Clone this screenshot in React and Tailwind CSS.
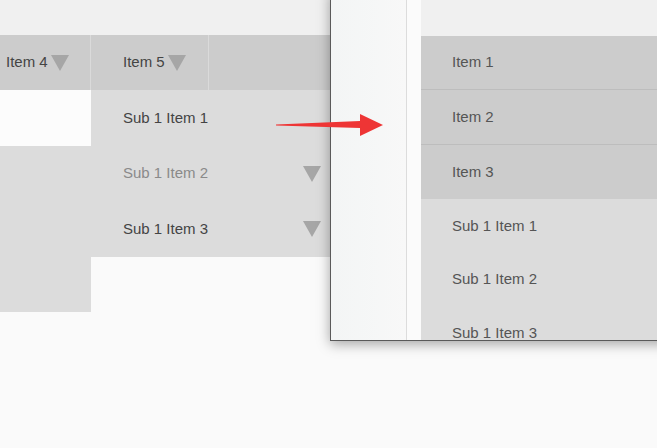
import React from "react";

const Caret = ({ className = "" }) => (
  <svg width="18" height="16" viewBox="0 0 18 16" className={className}>
    <polygon points="0,0 18,0 9,16" fill="#a6a6a6" />
  </svg>
);

const App = () => {
  return (
    <div className="relative w-[657px] h-[448px] overflow-hidden bg-[#fafafa] font-['Liberation_Sans',Arial,sans-serif] text-[15px]">
      {/* page behind */}
      <div className="h-[35px] bg-[#f0f0f0]"></div>
      <div className="flex h-[55px] bg-[#cccccc] text-[#444]">
        <div className="ml-[-26px] flex w-[117px] shrink-0 items-center gap-[3px] border-r border-[#dadada] pl-[32px]">
          <span>Item 4</span>
          <Caret className="mt-[1px]" />
        </div>
        <div className="flex w-[118px] shrink-0 items-center gap-[3px] border-r border-[#dadada] pl-[32px]">
          <span>Item 5</span>
          <Caret className="mt-[1px]" />
        </div>
      </div>
      <div className="flex items-start">
        <div className="ml-[-26px] w-[117px] shrink-0">
          <div className="h-[56px] bg-[#fcfcfc]"></div>
          <div className="h-[166px] bg-[#dcdcdc]"></div>
        </div>
        <div className="w-[250px] shrink-0 bg-[#dcdcdc] text-[#444]">
          <div className="flex h-[56px] items-center pl-[32px]">Sub 1 Item 1</div>
          <div className="flex h-[55px] items-center justify-between pl-[32px] pr-[20px] text-[#8a8a8a]">
            <span>Sub 1 Item 2</span>
            <Caret />
          </div>
          <div className="flex h-[56px] items-center justify-between pl-[32px] pr-[20px]">
            <span>Sub 1 Item 3</span>
            <Caret />
          </div>
        </div>
      </div>

      {/* mobile preview frame */}
      <div className="absolute left-[330px] top-[-10px] flex h-[351px] w-[340px] border border-[#5a5a5a] bg-[#fafafa] shadow-[0_3px_12px_rgba(0,0,0,0.35)]">
        <div className="w-[76px] shrink-0 bg-gradient-to-r from-[#f3f5f5] to-[#f8f8f8] border-r border-[#dcdcdc]"></div>
        <div className="w-[14px] shrink-0 bg-[#fbfbfb]"></div>
        <div className="flex-1 overflow-hidden text-[#555]">
          <div className="h-[45px] bg-[#f0f0f0]"></div>
          <div className="flex h-[54px] items-center border-b border-[#bdbdbd] bg-[#cccccc] pl-[31px]">Item 1</div>
          <div className="flex h-[55px] items-center border-b border-[#bdbdbd] bg-[#cccccc] pl-[31px]">Item 2</div>
          <div className="flex h-[54px] items-center bg-[#cccccc] pl-[31px]">Item 3</div>
          <div className="bg-[#dcdcdc]">
            <div className="flex h-[54px] items-center pl-[31px]">Sub 1 Item 1</div>
            <div className="flex h-[53px] items-center pl-[31px]">Sub 1 Item 2</div>
            <div className="flex h-[54px] items-center pl-[31px]">Sub 1 Item 3</div>
          </div>
        </div>
      </div>

      {/* red arrow */}
      <svg className="absolute left-[274px] top-[112px]" width="112" height="26" viewBox="0 0 112 26">
        <polygon points="2,12.5 86,9 86,2 109,13 86,24 86,16 2,13.5" fill="#ee3535" />
      </svg>
    </div>
  );
};

export default App;
